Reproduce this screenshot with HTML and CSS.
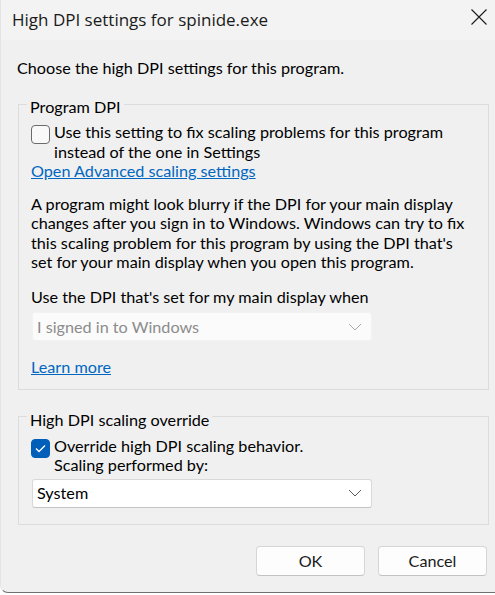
FILE: index.html
```html
<!DOCTYPE html>
<html lang="en">
<head>
    <meta charset="UTF-8">
    <title>High DPI settings for spinide.exe</title>
    <link rel="stylesheet" href="styles.css">
</head>
<body>
    <div class="window">
        <div class="titlebar">
            <span class="title">High DPI settings for spinide.exe</span>
            <span class="close">
                <svg width="16" height="16" viewBox="0 0 16 16">
                    <path d="M0.5 0.5 L15.5 15.5 M15.5 0.5 L0.5 15.5" stroke="#1a1a1a" stroke-width="1.1" fill="none"/>
                </svg>
            </span>
        </div>
        <div class="content">
            <p class="intro">Choose the high DPI settings for this program.</p>

            <fieldset class="group">
                <legend>Program DPI</legend>
                <div class="check">
                    <span class="box"></span>
                    <span class="check-text first">Use this setting to fix scaling problems for this program instead of the one in Settings</span>
                </div>
                <a href="#" class="link">Open Advanced scaling settings</a>
                <p class="desc">A program might look blurry if the DPI for your main display<br>changes after you sign in to Windows. Windows can try to fix<br>this scaling problem for this program by using the DPI that's<br>set for your main display when you open this program.</p>
                <p class="label">Use the DPI that's set for my main display when</p>
                <div class="combo disabled">
                    <span>I signed in to Windows</span>
                    <svg width="14" height="8" viewBox="0 0 14 8">
                        <path d="M1 1 L7 7 L13 1" stroke="#a8a8a8" stroke-width="1" fill="none"/>
                    </svg>
                </div>
                <a href="#" class="link learn">Learn more</a>
            </fieldset>

            <fieldset class="group second">
                <legend>High DPI scaling override</legend>
                <div class="check">
                    <span class="box checked">
                        <svg width="11" height="9" viewBox="0 0 11 9">
                            <path d="M1 4.5 L4 7.5 L10 1.5" stroke="#fff" stroke-width="1.3" fill="none"/>
                        </svg>
                    </span>
                    <span class="check-text override">Override high DPI scaling behavior. Scaling performed by:</span>
                </div>
                <div class="combo">
                    <span>System</span>
                    <svg width="14" height="8" viewBox="0 0 14 8">
                        <path d="M1 1 L7 7 L13 1" stroke="#5a5a5a" stroke-width="1" fill="none"/>
                    </svg>
                </div>
            </fieldset>

            <div class="buttons">
                <button class="btn">OK</button>
                <button class="btn">Cancel</button>
            </div>
        </div>
    </div>
</body>
</html>
```

FILE: styles.css
```css
body {
    margin: 0;
    background: #ffffff;
    font-family: Lato, "Open Sans", sans-serif;
    font-size: 16.2px;
    color: #000;
}

.window {
    width: 495px;
    height: 593px;
    background: #f0f0f0;
    border-bottom: 1px solid #707070;
    border-left: 1px solid #e4e4e4;
    border-bottom-left-radius: 8px;
    box-sizing: border-box;
    display: flex;
    flex-direction: column;
    overflow: hidden;
}

/* Title bar */
.titlebar {
    height: 40px;
    flex-shrink: 0;
    background: #f3f3f3;
    display: flex;
    align-items: center;
    justify-content: space-between;
    padding: 0 8px 0 11px;
}

.title {
    font-family: "Open Sans", sans-serif;
    font-size: 17px;
    color: #1a1a1a;
    margin-top: -2px;
}

.close {
    display: flex;
    margin-top: -7px;
}

.content {
    padding: 0 6px 0 16px;
    line-height: 19.5px;
}

.intro {
    margin: 18px 0 13px;
    line-height: 20px;
}

/* Group boxes */
.group {
    margin: 0 0 0 1px;
    padding: 0 6px 12px 12px;
    border: 1px solid #dcdcdc;
}

.group legend {
    margin-left: -4px;
    padding: 6px 3px 0;
    line-height: 20px;
}

.second {
    margin-top: 14px;
    padding-bottom: 16px;
}

.check {
    display: flex;
    gap: 4px;
    margin-top: 5px;
}

.second .check {
    margin-top: 6px;
}

.check-text.first {
    max-width: 410px;
}

.check-text.override {
    max-width: 275px;
}

.box {
    width: 19px;
    height: 19px;
    flex-shrink: 0;
    box-sizing: border-box;
    border: 1px solid #6b6b6b;
    border-radius: 4px;
    background: #f9f9f9;
    margin-top: 3px;
    display: flex;
    align-items: center;
    justify-content: center;
}

.box.checked {
    background: #005fb8;
    border-color: #005fb8;
}

.link {
    display: block;
    width: max-content;
    color: #0067c0;
    text-decoration: underline;
}

.desc {
    margin: 13px 0 0;
    white-space: nowrap;
}

.label {
    margin: 15px 0 0;
}

.combo {
    width: 340px;
    height: 29px;
    box-sizing: border-box;
    margin: 6px 0 0 1px;
    padding: 0 9px 0 4px;
    display: flex;
    align-items: center;
    justify-content: space-between;
    background: #ffffff;
    border: 1px solid #d9d9d9;
    border-bottom-color: #c4c4c4;
    border-radius: 3px;
}

.combo.disabled {
    background: #fbfbfb;
    border-color: #f2f2f2;
    color: #8c8c8c;
}

.second .combo {
    margin-top: 4px;
}

.learn {
    margin-top: 16px;
}

/* Dialog buttons */
.buttons {
    display: flex;
    justify-content: flex-end;
    gap: 13px;
    margin: 21px 2px 0 0;
}

.btn {
    width: 109px;
    height: 30px;
    font-family: inherit;
    font-size: 16.2px;
    color: #1a1a1a;
    background: #fdfdfd;
    border: 1px solid #d6d6d6;
    border-bottom-color: #c2c2c2;
    border-radius: 4px;
}
```
